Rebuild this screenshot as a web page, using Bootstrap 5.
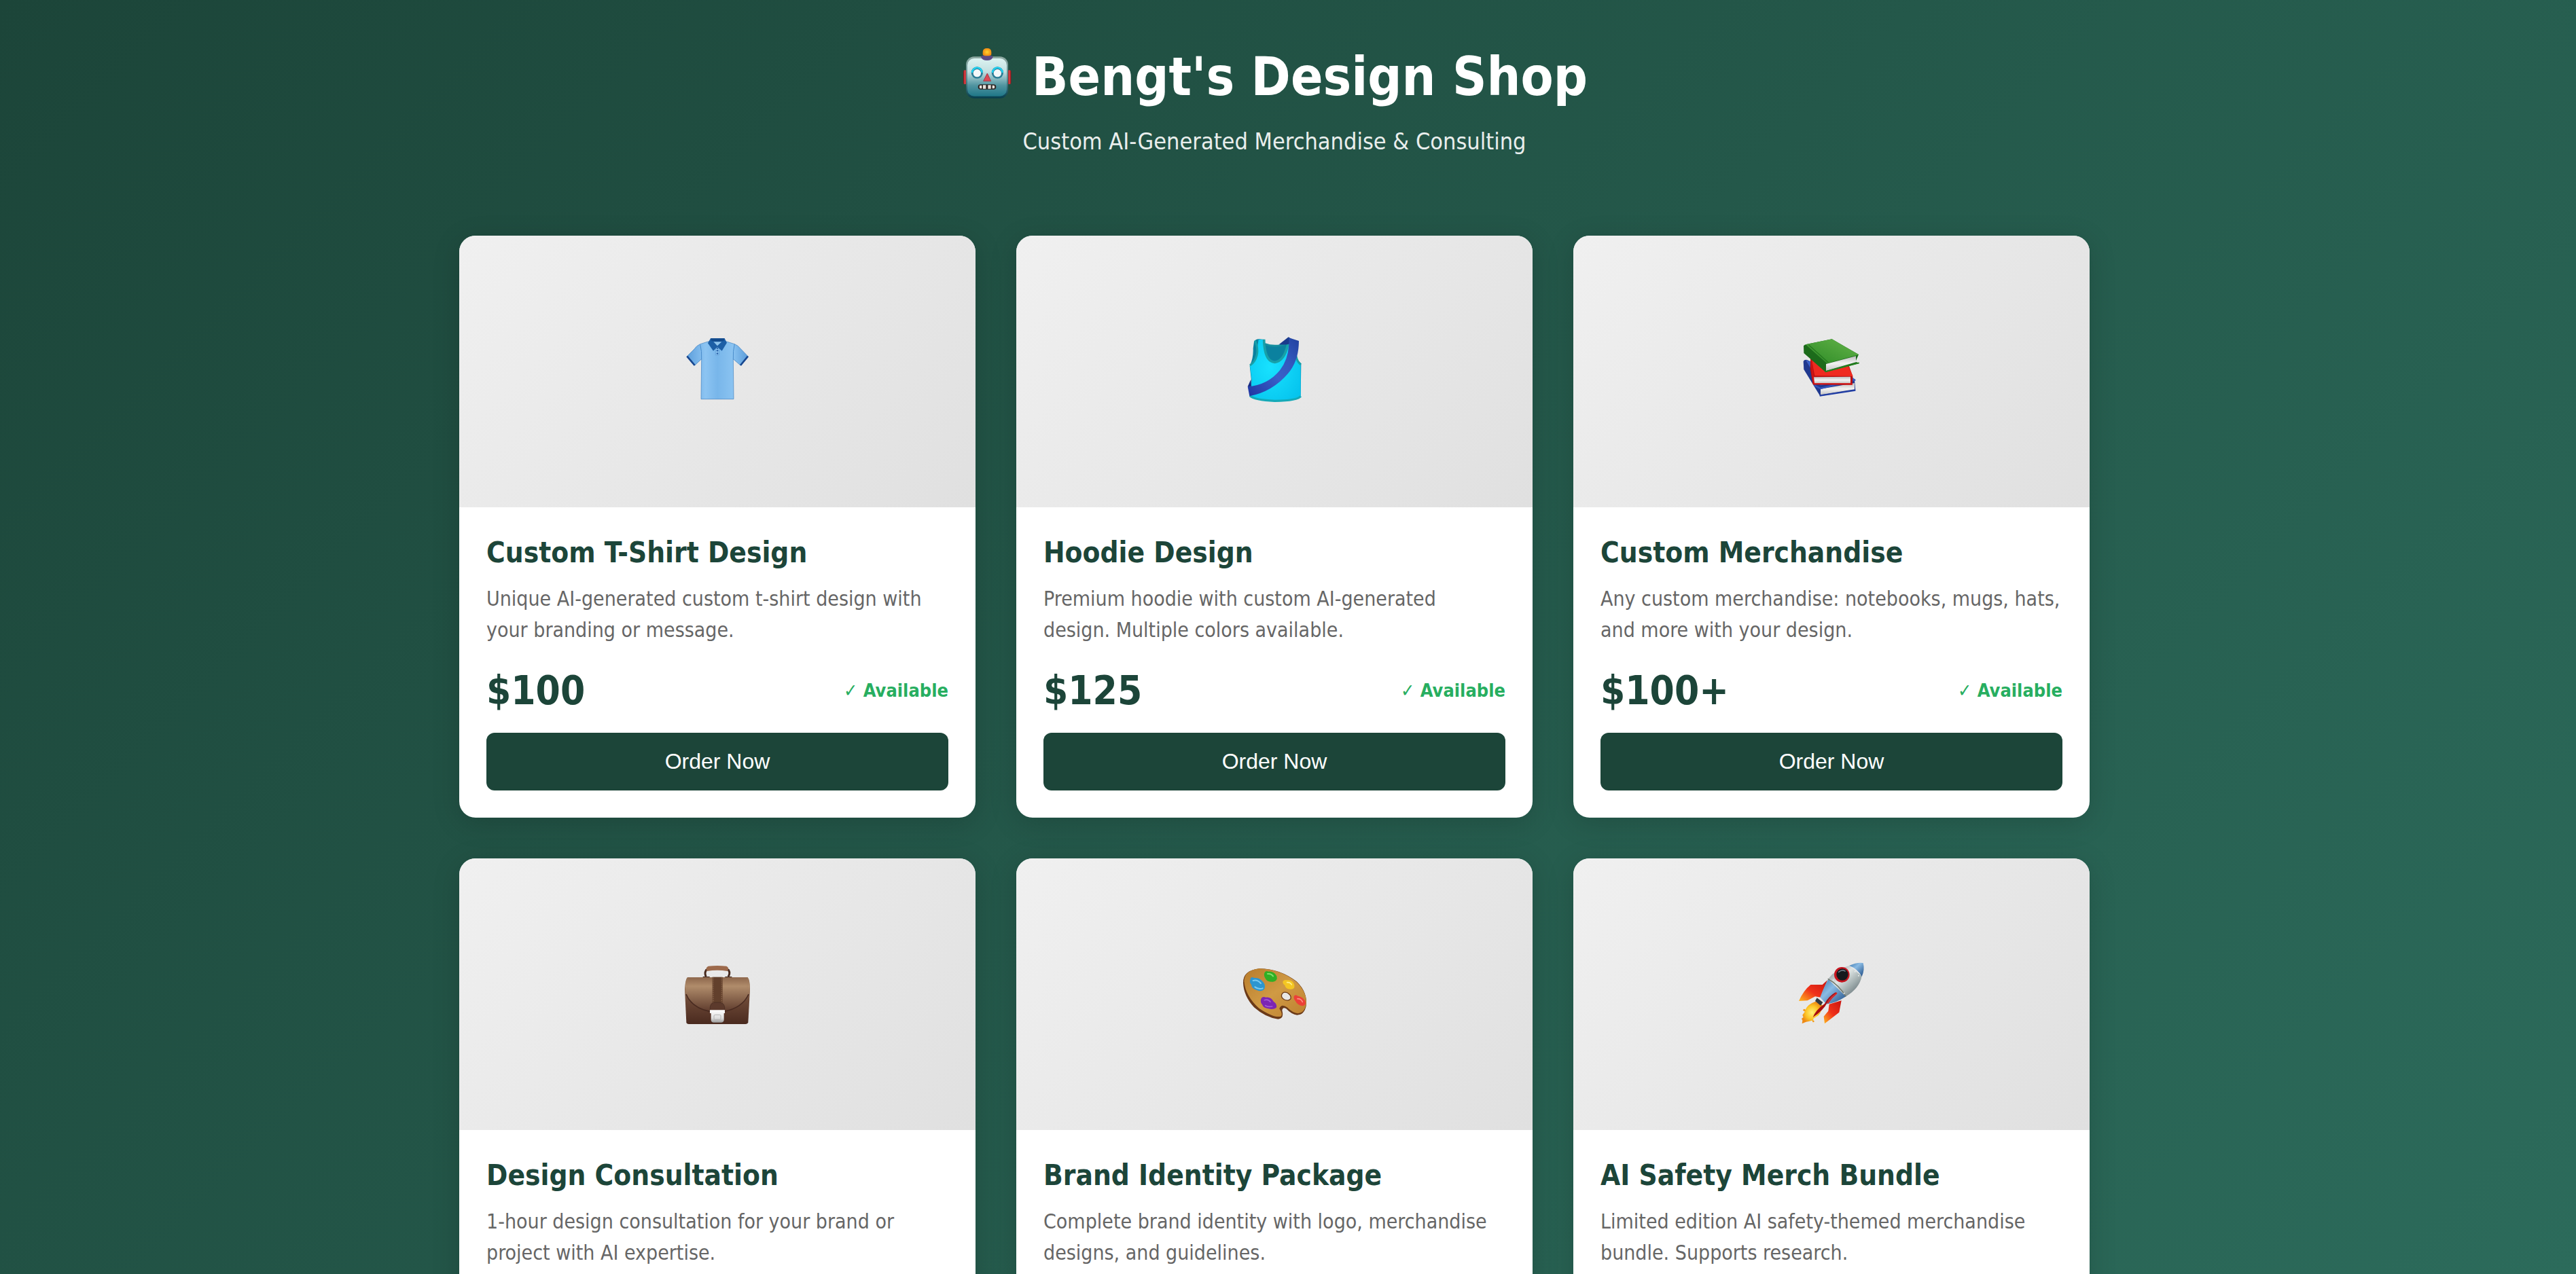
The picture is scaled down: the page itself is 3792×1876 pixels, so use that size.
<!DOCTYPE html>
<html lang="en">
<head>
<meta charset="utf-8">
<meta name="viewport" content="width=device-width, initial-scale=1">
<title>Bengt's Design Shop</title>
<link rel="stylesheet" href="https://cdn.jsdelivr.net/npm/bootstrap@5.3.0/dist/css/bootstrap.min.css">
<style>
:root { --forest: #1c4539; --moss: #2c6b5b; }
body {
  font-family: "DejaVu Sans Condensed", "DejaVu Sans", Tahoma, sans-serif;
  font-stretch: normal;
}
.shop-page {
  height: 100vh;
  padding: 64px 80px 0 40px;
  background: linear-gradient(135deg, var(--forest) 0%, var(--moss) 100%);
}
.shop-head { margin-bottom: 117px; color: #fff; }
.shop-title { font-size: 78px; line-height: 98px; gap: 24px; margin-bottom: 24px; }
.shop-title svg { width: 80px; height: 80px; }
.shop-tagline { font-size: 34px; line-height: 44px; opacity: .9; }
.shop-wrap { max-width: 2400px; }
.shop-wrap .row { --bs-gutter-x: 60px; --bs-gutter-y: 60px; }
.product {
  min-height: 857px;
  border: 0;
  border-radius: 24px;
  box-shadow: 0 8px 40px rgba(0, 0, 0, .15);
}
.product-art { height: 400px; background: linear-gradient(135deg, #f0f0f0 0%, #e0e0e0 100%); }
.product-art svg { width: 130px; height: 120px; }
.product-body { padding: 40px; }
.product-name { font-size: 42px; line-height: 54px; margin-bottom: 18px; color: var(--forest); }
.product-text { font-size: 30px; line-height: 46px; margin-bottom: 30px; color: #666; }
.product-meta { margin-bottom: 26px; }
.product-price { font-size: 58px; line-height: 72px; color: var(--forest); }
.product-stock { font-size: 27px; line-height: 36px; color: #27ae60; }
.btn-order {
  --bs-btn-color: #fff;
  --bs-btn-bg: var(--forest);
  --bs-btn-hover-color: #fff;
  --bs-btn-hover-bg: var(--moss);
  --bs-btn-border-width: 0;
  --bs-btn-border-radius: 12px;
  --bs-btn-padding-y: 24px;
  --bs-btn-font-size: 32px;
  --bs-btn-line-height: 37px;
  --bs-btn-font-family: "Liberation Sans", Arial, sans-serif;
}
</style>
</head>
<body>
<div class="shop-page overflow-hidden">
  <header class="shop-head text-center">
    <h1 class="shop-title d-flex justify-content-center align-items-start fw-bold">
      <svg class="mt-1 flex-shrink-0" viewBox="42 24 240 240" aria-hidden="true">
        <defs>
          <linearGradient id="rbFace" x1="0" y1="0" x2="0" y2="1"><stop offset="0" stop-color="#dcf3f1"/><stop offset=".35" stop-color="#c2dfe0"/><stop offset=".72" stop-color="#4f939f"/><stop offset="1" stop-color="#1f7788"/></linearGradient>
          <linearGradient id="rbRim" x1="0" y1="0" x2="0" y2="1"><stop offset="0" stop-color="#8fa9a2"/><stop offset=".5" stop-color="#5c8f92"/><stop offset="1" stop-color="#063e4e"/></linearGradient>
          <radialGradient id="rbBulb"><stop offset="0" stop-color="#ffd52e"/><stop offset="1" stop-color="#f08a12"/></radialGradient>
          <linearGradient id="rbEar"><stop offset="0" stop-color="#7d0c12"/><stop offset=".5" stop-color="#e0474b"/><stop offset="1" stop-color="#8d0b10"/></linearGradient>
        </defs>
        <rect x="51" y="130" width="15" height="62" rx="6" fill="url(#rbEar)"/>
        <rect x="247" y="130" width="15" height="62" rx="6" fill="url(#rbEar)"/>
        <rect x="63" y="70" width="186" height="184" rx="36" fill="url(#rbRim)"/>
        <rect x="69" y="78" width="174" height="167" rx="30" fill="url(#rbFace)"/>
        <path d="M129 72q2-7 12-7h29q10 0 12 7-4 15-26 15t-27-15z" fill="#5b4a83"/>
        <path d="M137 50q0-17 19-17t19 17v10q0 7-19 7t-19-7z" fill="url(#rbBulb)"/>
        <circle cx="112" cy="141" r="26" fill="#2d7d96"/><circle cx="202" cy="141" r="26" fill="#2d7d96"/>
        <path d="M90 141a22 22 0 0 1 44 0M180 141a22 22 0 0 1 44 0" fill="none" stroke="#1fd3f2" stroke-width="7"/>
        <circle cx="112" cy="143" r="17" fill="#f4f8fa"/><circle cx="202" cy="143" r="17" fill="#f4f8fa"/>
        <path d="M157 144l16 34h-33z" fill="#dc4a55" stroke="#a83a48" stroke-width="3" stroke-linejoin="round"/>
        <rect x="116" y="193" width="80" height="22" rx="11" fill="#2c2422"/>
        <path d="M124 197h9v14h-9q-4-7 0-14zM138 196h13v16h-13zM160 196h13v16h-13zM179 197h8q6 7 0 14h-8z" fill="#e8e4de"/>
      </svg>
      <span>Bengt's Design Shop</span>
    </h1>
    <p class="shop-tagline mb-0">Custom AI-Generated Merchandise &amp; Consulting</p>
  </header>

  <main class="shop-wrap mx-auto">
    <div class="row row-cols-3">
      <div class="col">
        <article class="card product overflow-hidden">
          <div class="product-art d-flex align-items-center justify-content-center">
            <svg viewBox="3 21 390 360" aria-hidden="true">
              <defs>
                <linearGradient id="shBody"><stop offset="0" stop-color="#5d9fdc"/><stop offset=".3" stop-color="#8cc4f2"/><stop offset=".5" stop-color="#78b6ea"/><stop offset=".75" stop-color="#8ac3f1"/><stop offset="1" stop-color="#5a9cda"/></linearGradient>
              </defs>
              <path d="M160 68L122 80Q106 87 96 102L64 134 98 174 128 146 126 323H270L268 146 300 174 333 134 300 100Q290 86 274 80L236 68Q198 90 160 68z" fill="url(#shBody)" stroke="#3c7fc0" stroke-width="2"/>
              <path d="M64 134L98 174M333 134L300 174" stroke="#16468f" stroke-width="8"/>
              <path d="M128 148Q130 110 122 82M268 148Q266 110 274 80" fill="none" stroke="#4a8dcb" stroke-width="3"/>
              <path d="M178 70h42l-21 34z" fill="#9fd0f3"/>
              <path d="M190 96h15v32q-7 6-15 0z" fill="#8bc3f0" stroke="#5a99d3" stroke-width="2"/>
              <path d="M168 55H230L240 74 218 110 198 92 180 110 156 76z" fill="#1d5fa6"/>
              <path d="M181 70H217L198 88z" fill="#8ec4ed"/>
              <path d="M168 55H230L226 66Q198 72 172 66z" fill="#124a8c"/>
              <g fill="#2e67ad"><circle cx="198" cy="98" r="4"/><circle cx="198" cy="109" r="4"/><circle cx="198" cy="122" r="4"/></g>
            </svg>
          </div>
          <div class="product-body">
            <h2 class="product-name fw-bold">Custom T-Shirt Design</h2>
            <p class="product-text">Unique AI-generated custom t-shirt design with your branding or message.</p>
            <div class="product-meta d-flex justify-content-between align-items-center">
              <span class="product-price fw-bold">$100</span>
              <span class="product-stock fw-bold">✓ Available</span>
            </div>
            <button type="button" class="btn btn-order w-100 d-block">Order Now</button>
          </div>
        </article>
      </div>

      <div class="col">
        <article class="card product overflow-hidden">
          <div class="product-art d-flex align-items-center justify-content-center">
            <svg viewBox="3 21 390 360" aria-hidden="true">
              <defs>
                <linearGradient id="vsSash" x1="0" y1="1" x2="1" y2="0"><stop offset="0" stop-color="#1f34a0"/><stop offset=".45" stop-color="#3a5fc9"/><stop offset=".7" stop-color="#3358bd"/><stop offset="1" stop-color="#22429f"/></linearGradient>
                <radialGradient id="vsBody" cx=".4" cy=".45" r=".7"><stop offset="0" stop-color="#18e2ff"/><stop offset="1" stop-color="#06c4ee"/></radialGradient>
              </defs>
              <path d="M108 70Q116 56 132 58L152 60 158 82Q205 100 258 76L290 66 300 150 316 166 314 308Q310 330 200 334 110 330 90 310L96 240 89 176Q106 140 104 100z" fill="#0b819f"/>
              <path d="M128 60L154 60Q156 156 200 160 246 152 262 58L288 66 294 144Q300 160 314 170V310Q300 330 200 331 110 328 90 308L98 240 90 176Q124 156 122 100z" fill="url(#vsBody)"/>
              <path d="M152 59Q154 158 200 160 246 154 260 66" fill="none" stroke="#18a0a8" stroke-width="11"/>
              <path d="M112 64Q128 100 120 130 112 160 90 174M294 136Q300 160 315 170" fill="none" stroke="#18a0a8" stroke-width="9"/>
              <path d="M156 80Q206 98 252 76" fill="none" stroke="#158f9f" stroke-width="9"/>
              <path d="M90 308Q110 328 200 331 300 330 314 310" fill="none" stroke="#14aab8" stroke-width="10"/>
              <path d="M218 82L260 49 274 58 262 80Q242 84 218 82z" fill="#1a3a8c"/>
              <path d="M262 52L306 66Q306 154 258 210 190 290 88 310L80 268Q168 262 222 196 266 140 262 52z" fill="url(#vsSash)"/>
              <path d="M80 268L94 236 96 266z" fill="#162a80"/>
            </svg>
          </div>
          <div class="product-body">
            <h2 class="product-name fw-bold">Hoodie Design</h2>
            <p class="product-text">Premium hoodie with custom AI-generated design. Multiple colors available.</p>
            <div class="product-meta d-flex justify-content-between align-items-center">
              <span class="product-price fw-bold">$125</span>
              <span class="product-stock fw-bold">✓ Available</span>
            </div>
            <button type="button" class="btn btn-order w-100 d-block">Order Now</button>
          </div>
        </article>
      </div>

      <div class="col">
        <article class="card product overflow-hidden">
          <div class="product-art d-flex align-items-center justify-content-center">
            <svg viewBox="3 21 390 360" aria-hidden="true">
              <defs>
                <linearGradient id="bkGreen" x1="0" y1="1" x2="1" y2="0"><stop offset="0" stop-color="#2c8a26"/><stop offset="1" stop-color="#65b449"/></linearGradient>
                <linearGradient id="bkPage" x1="0" y1="0" x2="0" y2="1"><stop offset="0" stop-color="#bdbdbd"/><stop offset=".5" stop-color="#f2f2f2"/><stop offset="1" stop-color="#c4c4c4"/></linearGradient>
              </defs>
              <path d="M74 156Q78 148 90 150L300 240 304 284 148 310 76 192z" fill="#20398f"/>
              <path d="M84 150L150 262 304 238 290 226z" fill="#3c5fc6"/>
              <path d="M150 278L300 252V280L150 304z" fill="url(#bkPage)"/>
              <path d="M122 262L150 276 304 238" fill="none" stroke="#3354ba" stroke-width="7"/>
              <path d="M146 308L304 284" stroke="#223fa6" stroke-width="6"/>
              <path d="M106 142L274 172 292 222 290 260 116 258 104 190z" fill="#b80f10"/>
              <path d="M110 146L124 220 293 222 270 172z" fill="#ef2a20"/>
              <path d="M120 226L282 224V254L120 254z" fill="url(#bkPage)"/>
              <path d="M108 146L120 256H290" fill="none" stroke="#cf1414" stroke-width="7"/>
              <path d="M75 88Q78 82 90 80L200 58 318 126 304 158 322 164 172 204 76 120z" fill="#1c6b1b"/>
              <path d="M84 82L200 58 319 127 178 165z" fill="url(#bkGreen)"/>
              <path d="M174 168L306 133V160L174 198z" fill="url(#bkPage)"/>
              <path d="M98 84L182 160" stroke="#25781f" stroke-width="4"/>
              <path d="M170 202L320 163" stroke="#23831f" stroke-width="5"/>
            </svg>
          </div>
          <div class="product-body">
            <h2 class="product-name fw-bold">Custom Merchandise</h2>
            <p class="product-text">Any custom merchandise: notebooks, mugs, hats, and more with your design.</p>
            <div class="product-meta d-flex justify-content-between align-items-center">
              <span class="product-price fw-bold">$100+</span>
              <span class="product-stock fw-bold">✓ Available</span>
            </div>
            <button type="button" class="btn btn-order w-100 d-block">Order Now</button>
          </div>
        </article>
      </div>

      <div class="col">
        <article class="card product overflow-hidden">
          <div class="product-art d-flex align-items-center justify-content-center">
            <svg viewBox="3 12 390 360" aria-hidden="true">
              <defs>
                <linearGradient id="bcBack" x1="0" y1="0" x2="0" y2="1"><stop offset="0" stop-color="#a5805f"/><stop offset=".5" stop-color="#6b4735"/><stop offset="1" stop-color="#4a2a1f"/></linearGradient>
                <linearGradient id="bcFlap" x1="0" y1="0" x2="0" y2="1"><stop offset="0" stop-color="#8d674c"/><stop offset=".25" stop-color="#b08c6b"/><stop offset="1" stop-color="#5c392b"/></linearGradient>
                <linearGradient id="bcLock" x1="0" y1="0" x2="0" y2="1"><stop offset="0" stop-color="#fff"/><stop offset=".65" stop-color="#dedede"/><stop offset="1" stop-color="#9a9a9a"/></linearGradient>
              </defs>
              <path d="M148 114Q140 100 148 86 160 74 198 74T248 86Q256 100 246 114" fill="none" stroke="#472a1e" stroke-width="9"/>
              <path d="M152 90Q144 74 158 68 198 64 238 68 252 74 242 90 198 82 152 90z" fill="#9d6a4c"/>
              <path d="M134 114h30v6h-30zM232 114h30v6h-30z" fill="#3e241a"/>
              <path d="M66 118H332Q342 130 342 170L334 316Q332 324 322 324H72Q62 324 61 316L54 170Q56 128 66 118z" fill="url(#bcBack)"/>
              <path d="M66 118H332Q342 130 341 186 318 252 226 272H166Q80 250 56 186 56 128 66 118z" fill="url(#bcFlap)"/>
              <path d="M60 192Q84 252 166 269H226Q310 252 336 192" fill="none" stroke="#482a20" stroke-width="5"/>
              <path d="M176 116H221V232H176z" fill="#62402c"/>
              <path d="M180 118V230M217 118V230M67 122V184M330 122V184" stroke="#a98463" stroke-width="2" stroke-dasharray="5 4"/>
              <path d="M166 264V250Q168 228 188 228H208Q228 230 230 250V264z" fill="#5c3a2c" stroke="#432820" stroke-width="2"/>
              <path d="M165 262H231V276H227V306Q226 317 214 317H182Q171 317 170 306V276H165z" fill="url(#bcLock)"/>
              <rect x="183" y="283" width="30" height="22" rx="5" fill="none" stroke="#b5b5b5" stroke-width="3"/>
            </svg>
          </div>
          <div class="product-body">
            <h2 class="product-name fw-bold">Design Consultation</h2>
            <p class="product-text">1-hour design consultation for your brand or project with AI expertise.</p>
          </div>
        </article>
      </div>

      <div class="col">
        <article class="card product overflow-hidden">
          <div class="product-art d-flex align-items-center justify-content-center">
            <svg viewBox="3 12 390 360" aria-hidden="true">
              <defs>
                <linearGradient id="plWood" x1="0" y1="0" x2="1" y2="1"><stop offset="0" stop-color="#b87c2c"/><stop offset=".5" stop-color="#d09a44"/><stop offset="1" stop-color="#bd802f"/></linearGradient>
              </defs>
              <path d="M60 142Q58 88 130 79 220 78 296 136 346 184 338 244 330 284 298 284 274 282 250 256 234 246 232 264 242 300 214 302 160 296 108 250 62 200 60 142z" fill="#6b3a18"/>
              <path d="M64 134Q66 86 132 79 222 80 296 138 344 186 338 238 330 276 302 277 280 276 254 250 228 232 220 256 238 282 226 290 196 298 130 254 70 200 64 134zM230 194Q226 206 242 216 262 224 270 212 274 198 256 186 236 178 230 194z" fill="url(#plWood)" fill-rule="evenodd"/>
              <path d="M230 194Q226 206 242 216 262 224 270 212 274 198 256 186 236 178 230 194z" fill="#e9e7e4" stroke="#6b3a18" stroke-width="4"/>
              <path d="M92 124Q96 112 108 120 132 118 146 136 160 148 154 168 142 184 120 174 98 168 96 150 86 140 92 124z" fill="#2c96d0"/>
              <path d="M104 132Q122 126 138 144M112 160q16 12 34 6" fill="none" stroke="#7ccbf0" stroke-width="6" stroke-linecap="round"/>
              <path d="M154 98Q158 86 172 92 196 90 208 112 214 134 192 137 164 138 158 122 150 110 154 98z" fill="#2faf24"/>
              <path d="M168 102Q184 100 192 112" fill="none" stroke="#80e26c" stroke-width="6" stroke-linecap="round"/>
              <path d="M236 134Q242 126 254 130 278 126 286 150 290 172 268 170 246 168 244 152 232 144 236 134z" fill="#f4c623"/>
              <path d="M254 140Q268 138 274 150" fill="none" stroke="#fff08a" stroke-width="5" stroke-linecap="round"/>
              <path d="M284 202Q290 190 302 200 324 204 334 222 340 242 322 244 300 240 292 224 282 214 284 202z" fill="#ec4038"/>
              <path d="M300 212Q316 212 322 226" fill="none" stroke="#ff9186" stroke-width="5" stroke-linecap="round"/>
              <path d="M138 216Q142 200 160 206 182 202 194 224 212 236 206 252 192 262 172 256 150 254 144 238 136 230 138 216z" fill="#7c25b4"/>
              <path d="M154 218Q170 212 180 226M158 242q14 8 30 4" fill="none" stroke="#a45cd6" stroke-width="5" stroke-linecap="round"/>
            </svg>
          </div>
          <div class="product-body">
            <h2 class="product-name fw-bold">Brand Identity Package</h2>
            <p class="product-text">Complete brand identity with logo, merchandise designs, and guidelines.</p>
          </div>
        </article>
      </div>

      <div class="col">
        <article class="card product overflow-hidden">
          <div class="product-art d-flex align-items-center justify-content-center">
            <svg viewBox="3 12 390 360" aria-hidden="true">
              <defs>
                <linearGradient id="rkHull" x1="0" y1="0" x2="1" y2="1"><stop offset=".1" stop-color="#8b979c"/><stop offset=".4" stop-color="#dfe5e4"/><stop offset=".65" stop-color="#a3afb0"/><stop offset="1" stop-color="#4c5a60"/></linearGradient>
                <linearGradient id="rkBlue" x1="0" y1="0" x2="1" y2="1"><stop offset="0" stop-color="#3f78ae"/><stop offset=".4" stop-color="#8abbe4"/><stop offset="1" stop-color="#1d4a82"/></linearGradient>
                <linearGradient id="rkFin" x1="1" y1="0" x2="0" y2="1"><stop offset="0" stop-color="#c91410"/><stop offset=".55" stop-color="#f0321a"/><stop offset="1" stop-color="#ffb81e"/></linearGradient>
                <radialGradient id="rkFire"><stop offset="0" stop-color="#fff27a"/><stop offset=".6" stop-color="#fcc526"/><stop offset="1" stop-color="#ee8a14"/></radialGradient>
              </defs>
              <path d="M128 224Q92 236 82 262L76 258 80 270 70 284 74 294 66 300 70 308 68 322 86 314 98 312 112 308 118 314 118 300 140 286Q156 268 158 240z" fill="url(#rkFire)"/>
              <path d="M180 130L158 150 106 150Q74 176 54 222L92 220 126 202 150 206z" fill="url(#rkFin)"/>
              <path d="M188 236L242 220 232 272 168 322 164 290 184 266z" fill="url(#rkFin)"/>
              <path d="M184 126Q164 160 148 206L176 236Q216 232 262 202z" fill="url(#rkBlue)"/>
              <path d="M276 66Q214 82 184 124L262 202Q322 166 332 112z" fill="url(#rkHull)"/>
              <path d="M276 66Q310 50 338 54 346 84 332 114 312 78 276 66z" fill="url(#rkBlue)"/>
              <path d="M182 124Q230 150 262 202" fill="none" stroke="#6e7467" stroke-width="4"/>
              <circle cx="244" cy="106" r="34" fill="#c71620"/>
              <circle cx="246" cy="105" r="26" fill="#15191d"/>
              <path d="M230 94Q244 82 258 90" fill="none" stroke="#6c7b86" stroke-width="5" stroke-linecap="round"/>
              <path d="M134 208L160 228 150 242 126 222z" fill="#30393f"/>
              <path d="M222 186Q196 200 180 228 164 262 116 294 128 262 168 234 186 200 216 184z" fill="#a80d10"/>
              <path d="M220 188Q196 208 182 230" fill="none" stroke="#e2231e" stroke-width="6" stroke-linecap="round"/>
              <g fill="#e8ecec"><circle cx="206" cy="130" r="3"/><circle cx="254" cy="188" r="3"/><circle cx="302" cy="92" r="3"/><circle cx="318" cy="110" r="3"/></g>
              <circle cx="78" cy="262" r="5" fill="#f29a1c"/><circle cx="118" cy="312" r="4" fill="#f29a1c"/>
            </svg>
          </div>
          <div class="product-body">
            <h2 class="product-name fw-bold">AI Safety Merch Bundle</h2>
            <p class="product-text">Limited edition AI safety-themed merchandise bundle. Supports research.</p>
          </div>
        </article>
      </div>
    </div>
  </main>
</div>
<script src="https://cdn.jsdelivr.net/npm/bootstrap@5.3.0/dist/js/bootstrap.bundle.min.js"></script>
</body>
</html>
